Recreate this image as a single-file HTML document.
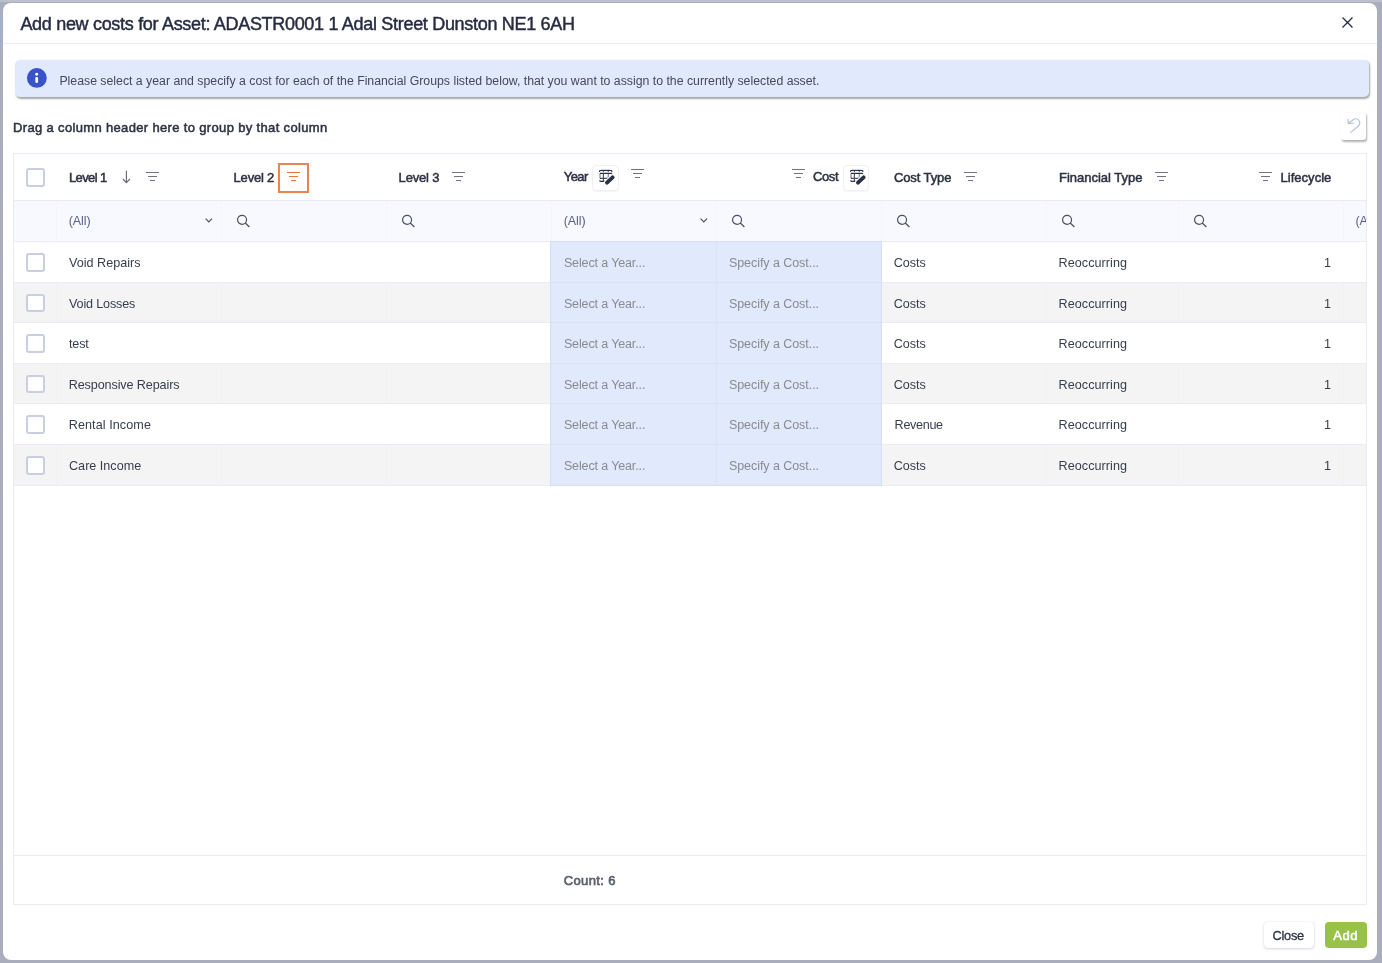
<!DOCTYPE html><html><head><meta charset="utf-8"><style>

html,body{margin:0;padding:0;}
body{width:1382px;height:963px;overflow:hidden;position:relative;background:#aaadbc;font-family:"Liberation Sans", sans-serif;}
.bgt{position:absolute;left:0;top:0;width:1382px;height:2px;background:#bcc0cc;}
.bgl{position:absolute;left:0;top:11px;width:3px;height:40px;background:#a6aec8;}
.modal{position:absolute;left:2.5px;top:3px;width:1374.7px;height:957px;background:#fff;border-radius:8px;overflow:hidden;}
.inner{position:absolute;left:-2.5px;top:-3px;width:1382px;height:963px;will-change:transform;}
.txt{position:absolute;left:0;top:0;font-family:"Liberation Sans", sans-serif;}
.ic{position:absolute;overflow:visible;}
.hl{position:absolute;height:1px;background:#eaecf3;}
.vl{position:absolute;width:1px;}
.info{position:absolute;left:15px;top:60px;width:1353.5px;height:37px;background:#e1e9fc;border-radius:5px;box-shadow:1px 1.5px 2px rgba(0,0,0,0.35);}
.undo{position:absolute;left:1340.7px;top:113.2px;width:25px;height:27px;background:#fff;border-radius:3px;box-shadow:1px 1.5px 2px rgba(0,0,0,0.3);}
.grid{position:absolute;left:13px;top:153px;width:1352px;height:750px;border:1px solid #eaecf3;}
.frow{position:absolute;left:14px;top:201px;width:1352px;height:40px;background:#f8f9fe;}
.row{position:absolute;left:14px;width:1352px;}
.blue{position:absolute;left:551px;width:330px;background:#e1e9fc;}
.cb{position:absolute;width:14.5px;height:14.5px;border:2px solid #c9cee2;border-radius:3px;background:#fff;}
.eb{position:absolute;width:24.5px;height:24.5px;border:1px solid #eef0f5;border-radius:4px;background:#fff;box-shadow:0 1px 1px rgba(0,0,0,0.04);}
.obox{position:absolute;left:278.3px;top:163px;width:26.5px;height:26.3px;border:2px solid #ea8552;}
.btn{position:absolute;top:922.2px;height:26.3px;border-radius:4px;}
.close{left:1263.5px;width:50px;background:#fff;box-shadow:0 1px 3px rgba(40,50,90,0.18),0 0 1px rgba(40,50,90,0.2);}
.add{left:1325px;width:41.5px;background:#97c147;}

</style></head><body>
<div class="bgt"></div><div class="bgl"></div>
<div class="modal"><div class="inner">
<svg class="ic" style="left:1341.5px;top:16.5px" width="11" height="11" viewBox="0 0 11 11"><path d="M0.5 0.5L10.5 10.5M10.5 0.5L0.5 10.5" stroke="#262b40" stroke-width="1.3" fill="none"/></svg>
<div class="hl" style="left:0;top:43px;width:1382px;background:#eceef5"></div>
<div class="info"></div>
<svg class="ic" style="left:26.7px;top:68.2px" width="20" height="20" viewBox="0 0 20 20"><circle cx="9.85" cy="9.9" r="9.9" fill="#3a53cb"/><circle cx="9.7" cy="6.2" r="1.45" fill="#fff"/><rect x="8.35" y="8.9" width="2.7" height="6" rx="1.1" fill="#fff"/></svg>
<div class="undo"><svg width="25" height="27" viewBox="0 0 25 27" style="position:absolute;left:0;top:0"><path d="M7.3 10.2L11.8 7.0A4.1 4.1 0 0 1 17.5 13.0L9.4 19.6" stroke="#b9c0dc" stroke-width="1.2" fill="none"/><path d="M7.2 6V10.4H12.6" stroke="#b9c0dc" stroke-width="1.2" fill="none"/></svg></div>
<div class="grid"></div>
<div class="hl" style="left:14px;top:200px;width:1352px"></div>
<div class="frow"></div>
<div class="hl" style="left:14px;top:241px;width:1352px"></div>
<div class="cb" style="left:26.3px;top:168px"></div>
<svg class="ic" style="left:121px;top:170px" width="11" height="14" viewBox="0 0 11 14"><path d="M5.4 0.8V12.5M1.9 9L5.4 12.6L8.9 9" stroke="#666b7e" stroke-width="1.15" fill="none"/></svg>
<svg class="ic" style="left:146px;top:172px" width="14" height="10" viewBox="0 0 14 10"><path d="M0 0.5H13M2 4.5H11M4 8.5H9" stroke="#6f7386" stroke-width="1.15" fill="none"/></svg>
<div class="obox"></div>
<svg class="ic" style="left:287px;top:172px" width="14" height="10" viewBox="0 0 14 10"><path d="M0 0.5H13M2 4.5H11M4 8.5H9" stroke="#e7783f" stroke-width="1.15" fill="none"/></svg>
<svg class="ic" style="left:452px;top:172px" width="14" height="10" viewBox="0 0 14 10"><path d="M0 0.5H13M2 4.5H11M4 8.5H9" stroke="#6f7386" stroke-width="1.15" fill="none"/></svg>
<div class="eb" style="left:592px;top:164.5px"></div><svg class="ic" style="left:596px;top:166.0px" width="20" height="20" viewBox="0 0 20 20"><path d="M5 3.8H14" stroke="#2b3046" stroke-opacity="0.3" stroke-width="0.9" fill="none"/><path d="M3.6 5.9V5.1Q3.6 4.5 4.3 4.5H15.1Q15.8 4.5 15.8 5.1V5.9M7.4 4.5V5.7M12.3 4.5V5.7" stroke="#2b3046" stroke-width="1.15" fill="none"/><path d="M3.9 7.4H15.1Q15.9 7.4 15.9 8.6" stroke="#2b3046" stroke-width="1.2" fill="none"/><path d="M4 7.4V12.4M12.3 7.4V12.4" stroke="#2b3046" stroke-opacity="0.6" stroke-width="1.15" fill="none"/><path d="M7.4 7.4V15.3M4 12.3H12.3" stroke="#2b3046" stroke-opacity="0.85" stroke-width="1.15" fill="none"/><path d="M3.7 14.3Q3.7 15.3 4.7 15.3H9.2" stroke="#2b3046" stroke-width="1.2" fill="none"/><path d="M10.8 16.9L16.8 11.2" stroke="#ffffff" stroke-width="6" stroke-linecap="round"/><path d="M11 16.7L16.6 11.4" stroke="#2b3046" stroke-width="3.9" stroke-linecap="round"/></svg>
<svg class="ic" style="left:631px;top:169px" width="14" height="10" viewBox="0 0 14 10"><path d="M0 0.5H13M2 4.5H11M4 8.5H9" stroke="#6f7386" stroke-width="1.15" fill="none"/></svg>
<svg class="ic" style="left:792px;top:169px" width="14" height="10" viewBox="0 0 14 10"><path d="M0 0.5H13M2 4.5H11M4 8.5H9" stroke="#6f7386" stroke-width="1.15" fill="none"/></svg>
<div class="eb" style="left:842.5px;top:164.5px"></div><svg class="ic" style="left:846.5px;top:166.0px" width="20" height="20" viewBox="0 0 20 20"><path d="M5 3.8H14" stroke="#2b3046" stroke-opacity="0.3" stroke-width="0.9" fill="none"/><path d="M3.6 5.9V5.1Q3.6 4.5 4.3 4.5H15.1Q15.8 4.5 15.8 5.1V5.9M7.4 4.5V5.7M12.3 4.5V5.7" stroke="#2b3046" stroke-width="1.15" fill="none"/><path d="M3.9 7.4H15.1Q15.9 7.4 15.9 8.6" stroke="#2b3046" stroke-width="1.2" fill="none"/><path d="M4 7.4V12.4M12.3 7.4V12.4" stroke="#2b3046" stroke-opacity="0.6" stroke-width="1.15" fill="none"/><path d="M7.4 7.4V15.3M4 12.3H12.3" stroke="#2b3046" stroke-opacity="0.85" stroke-width="1.15" fill="none"/><path d="M3.7 14.3Q3.7 15.3 4.7 15.3H9.2" stroke="#2b3046" stroke-width="1.2" fill="none"/><path d="M10.8 16.9L16.8 11.2" stroke="#ffffff" stroke-width="6" stroke-linecap="round"/><path d="M11 16.7L16.6 11.4" stroke="#2b3046" stroke-width="3.9" stroke-linecap="round"/></svg>
<svg class="ic" style="left:964px;top:172px" width="14" height="10" viewBox="0 0 14 10"><path d="M0 0.5H13M2 4.5H11M4 8.5H9" stroke="#6f7386" stroke-width="1.15" fill="none"/></svg>
<svg class="ic" style="left:1155px;top:172px" width="14" height="10" viewBox="0 0 14 10"><path d="M0 0.5H13M2 4.5H11M4 8.5H9" stroke="#6f7386" stroke-width="1.15" fill="none"/></svg>
<svg class="ic" style="left:1259px;top:172px" width="14" height="10" viewBox="0 0 14 10"><path d="M0 0.5H13M2 4.5H11M4 8.5H9" stroke="#6f7386" stroke-width="1.15" fill="none"/></svg>
<svg class="ic" style="left:204.7px;top:217.8px" width="8" height="5" viewBox="0 0 8 5"><path d="M0.6 0.6L3.8 4L7 0.6" stroke="#4b5068" stroke-width="1.15" fill="none"/></svg>
<svg class="ic" style="left:237px;top:214.5px" width="14" height="13" viewBox="0 0 14 13"><circle cx="5.05" cy="4.85" r="4.5" stroke="#4b5068" stroke-width="1.2" fill="none"/><path d="M8.3 8.1L12.4 11.9" stroke="#4b5068" stroke-width="1.3" fill="none"/></svg>
<svg class="ic" style="left:402px;top:214.5px" width="14" height="13" viewBox="0 0 14 13"><circle cx="5.05" cy="4.85" r="4.5" stroke="#4b5068" stroke-width="1.2" fill="none"/><path d="M8.3 8.1L12.4 11.9" stroke="#4b5068" stroke-width="1.3" fill="none"/></svg>
<svg class="ic" style="left:699.7px;top:217.8px" width="8" height="5" viewBox="0 0 8 5"><path d="M0.6 0.6L3.8 4L7 0.6" stroke="#4b5068" stroke-width="1.15" fill="none"/></svg>
<svg class="ic" style="left:732px;top:214.5px" width="14" height="13" viewBox="0 0 14 13"><circle cx="5.05" cy="4.85" r="4.5" stroke="#4b5068" stroke-width="1.2" fill="none"/><path d="M8.3 8.1L12.4 11.9" stroke="#4b5068" stroke-width="1.3" fill="none"/></svg>
<svg class="ic" style="left:897px;top:214.5px" width="14" height="13" viewBox="0 0 14 13"><circle cx="5.05" cy="4.85" r="4.5" stroke="#4b5068" stroke-width="1.2" fill="none"/><path d="M8.3 8.1L12.4 11.9" stroke="#4b5068" stroke-width="1.3" fill="none"/></svg>
<svg class="ic" style="left:1062px;top:214.5px" width="14" height="13" viewBox="0 0 14 13"><circle cx="5.05" cy="4.85" r="4.5" stroke="#4b5068" stroke-width="1.2" fill="none"/><path d="M8.3 8.1L12.4 11.9" stroke="#4b5068" stroke-width="1.3" fill="none"/></svg>
<svg class="ic" style="left:1194px;top:214.5px" width="14" height="13" viewBox="0 0 14 13"><circle cx="5.05" cy="4.85" r="4.5" stroke="#4b5068" stroke-width="1.2" fill="none"/><path d="M8.3 8.1L12.4 11.9" stroke="#4b5068" stroke-width="1.3" fill="none"/></svg>
<div class="vl" style="left:56px;top:201px;height:40px;background:#f5f6fb"></div>
<div class="vl" style="left:221px;top:201px;height:40px;background:#f5f6fb"></div>
<div class="vl" style="left:386px;top:201px;height:40px;background:#f5f6fb"></div>
<div class="vl" style="left:551px;top:201px;height:40px;background:#f5f6fb"></div>
<div class="vl" style="left:716px;top:201px;height:40px;background:#f5f6fb"></div>
<div class="vl" style="left:881px;top:201px;height:40px;background:#f5f6fb"></div>
<div class="vl" style="left:1046px;top:201px;height:40px;background:#f5f6fb"></div>
<div class="vl" style="left:1178px;top:201px;height:40px;background:#f5f6fb"></div>
<div class="vl" style="left:1343px;top:201px;height:40px;background:#f5f6fb"></div>
<div class="row" style="top:242px;height:40px;background:#ffffff"></div>
<div class="blue" style="top:241px;height:42px"></div>
<div class="hl" style="left:14px;top:282px;width:1352px"></div>
<div class="cb" style="left:26.3px;top:253.25px"></div>
<div class="row" style="top:283px;height:39px;background:#f4f4f5"></div>
<div class="blue" style="top:282px;height:41px"></div>
<div class="hl" style="left:14px;top:322px;width:1352px"></div>
<div class="vl" style="left:56px;top:283px;height:39px;background:#f1f1f4"></div>
<div class="vl" style="left:221px;top:283px;height:39px;background:#f1f1f4"></div>
<div class="vl" style="left:386px;top:283px;height:39px;background:#f1f1f4"></div>
<div class="vl" style="left:1046px;top:283px;height:39px;background:#f1f1f4"></div>
<div class="vl" style="left:1178px;top:283px;height:39px;background:#f1f1f4"></div>
<div class="vl" style="left:1343px;top:283px;height:39px;background:#f1f1f4"></div>
<div class="cb" style="left:26.3px;top:293.75px"></div>
<div class="row" style="top:323px;height:40px;background:#ffffff"></div>
<div class="blue" style="top:322px;height:42px"></div>
<div class="hl" style="left:14px;top:363px;width:1352px"></div>
<div class="cb" style="left:26.3px;top:334.25px"></div>
<div class="row" style="top:364px;height:39px;background:#f4f4f5"></div>
<div class="blue" style="top:363px;height:41px"></div>
<div class="hl" style="left:14px;top:403px;width:1352px"></div>
<div class="vl" style="left:56px;top:364px;height:39px;background:#f1f1f4"></div>
<div class="vl" style="left:221px;top:364px;height:39px;background:#f1f1f4"></div>
<div class="vl" style="left:386px;top:364px;height:39px;background:#f1f1f4"></div>
<div class="vl" style="left:1046px;top:364px;height:39px;background:#f1f1f4"></div>
<div class="vl" style="left:1178px;top:364px;height:39px;background:#f1f1f4"></div>
<div class="vl" style="left:1343px;top:364px;height:39px;background:#f1f1f4"></div>
<div class="cb" style="left:26.3px;top:374.75px"></div>
<div class="row" style="top:404px;height:40px;background:#ffffff"></div>
<div class="blue" style="top:403px;height:42px"></div>
<div class="hl" style="left:14px;top:444px;width:1352px"></div>
<div class="cb" style="left:26.3px;top:415.25px"></div>
<div class="row" style="top:445px;height:40px;background:#f4f4f5"></div>
<div class="blue" style="top:444px;height:42px"></div>
<div class="hl" style="left:14px;top:485px;width:1352px"></div>
<div class="vl" style="left:56px;top:445px;height:40px;background:#f1f1f4"></div>
<div class="vl" style="left:221px;top:445px;height:40px;background:#f1f1f4"></div>
<div class="vl" style="left:386px;top:445px;height:40px;background:#f1f1f4"></div>
<div class="vl" style="left:1046px;top:445px;height:40px;background:#f1f1f4"></div>
<div class="vl" style="left:1178px;top:445px;height:40px;background:#f1f1f4"></div>
<div class="vl" style="left:1343px;top:445px;height:40px;background:#f1f1f4"></div>
<div class="cb" style="left:26.3px;top:456.25px"></div>
<div class="hl" style="left:551px;top:241px;width:330px;background:#d6e1fb"></div>
<div class="hl" style="left:551px;top:282px;width:330px;background:#d6e1fb"></div>
<div class="hl" style="left:551px;top:322px;width:330px;background:#d6e1fb"></div>
<div class="hl" style="left:551px;top:363px;width:330px;background:#d6e1fb"></div>
<div class="hl" style="left:551px;top:403px;width:330px;background:#d6e1fb"></div>
<div class="hl" style="left:551px;top:444px;width:330px;background:#d6e1fb"></div>
<div class="vl" style="left:550px;top:241px;height:245px;background:#d3defa"></div>
<div class="vl" style="left:716px;top:241px;height:245px;background:#dae3fb"></div>
<div class="vl" style="left:881px;top:241px;height:245px;background:#d3defa"></div>
<div class="hl" style="left:551px;top:485px;width:330px;background:#d3defa"></div>
<div class="hl" style="left:551px;top:241px;width:330px;background:#d3defa"></div>
<div class="hl" style="left:14px;top:855px;width:1352px"></div>
<div class="btn close"></div>
<div class="btn add"></div>
<svg class="txt" width="1382" height="963" viewBox="0 0 1382 963"><defs><clipPath id="clipA"><rect x="1343" y="201" width="23" height="40"/></clipPath></defs>
<text x="20.40" y="29.70" font-size="18" fill="#262b40" textLength="554.60" lengthAdjust="spacing" stroke="#262b40" stroke-width="0.45">Add new costs for Asset: ADASTR0001 1 Adal Street Dunston NE1 6AH</text>
<text x="59.40" y="84.80" font-size="12.3" fill="#454a5b" textLength="760.02" lengthAdjust="spacing">Please select a year and specify a cost for each of the Financial Groups listed below, that you want to assign to the currently selected asset.</text>
<text x="13.00" y="132.00" font-size="13" fill="#2d3142" textLength="314.23" lengthAdjust="spacing" stroke="#2d3142" stroke-width="0.5">Drag a column header here to group by that column</text>
<text x="68.90" y="182.00" font-size="13" fill="#2d3142" textLength="38.33" lengthAdjust="spacing" stroke="#2d3142" stroke-width="0.5">Level 1</text>
<text x="233.60" y="182.00" font-size="13" fill="#2d3142" textLength="40.63" lengthAdjust="spacing" stroke="#2d3142" stroke-width="0.5">Level 2</text>
<text x="398.60" y="182.00" font-size="13" fill="#2d3142" textLength="40.93" lengthAdjust="spacing" stroke="#2d3142" stroke-width="0.5">Level 3</text>
<text x="563.80" y="181.00" font-size="13" fill="#2d3142" textLength="24.43" lengthAdjust="spacing" stroke="#2d3142" stroke-width="0.5">Year</text>
<text x="813.10" y="181.00" font-size="13" fill="#2d3142" textLength="25.41" lengthAdjust="spacing" stroke="#2d3142" stroke-width="0.5">Cost</text>
<text x="893.90" y="181.50" font-size="13" fill="#2d3142" textLength="57.53" lengthAdjust="spacing" stroke="#2d3142" stroke-width="0.5">Cost Type</text>
<text x="1059.00" y="182.00" font-size="13" fill="#2d3142" textLength="83.43" lengthAdjust="spacing" stroke="#2d3142" stroke-width="0.5">Financial Type</text>
<text x="1280.50" y="182.00" font-size="13" fill="#2d3142" textLength="50.83" lengthAdjust="spacing" stroke="#2d3142" stroke-width="0.5">Lifecycle</text>
<text x="68.70" y="225.30" font-size="12.5" fill="#59618f" textLength="21.96" lengthAdjust="spacing">(All)</text>
<text x="563.70" y="225.30" font-size="12.5" fill="#59618f" textLength="21.96" lengthAdjust="spacing">(All)</text>
<text x="1355.40" y="225.30" font-size="12.5" fill="#59618f" textLength="21.96" lengthAdjust="spacing" clip-path="url(#clipA)">(All)</text>
<text x="69.00" y="267.00" font-size="12.6" fill="#383d4e" textLength="71.50" lengthAdjust="spacing">Void Repairs</text>
<text x="563.90" y="267.00" font-size="12.5" fill="#898b92" textLength="81.47" lengthAdjust="spacing">Select a Year...</text>
<text x="728.90" y="267.00" font-size="12.5" fill="#898b92" textLength="90.17" lengthAdjust="spacing">Specify a Cost...</text>
<text x="893.80" y="267.00" font-size="12.6" fill="#383d4e" textLength="31.90" lengthAdjust="spacing">Costs</text>
<text x="1058.50" y="267.00" font-size="12.6" fill="#383d4e" textLength="68.50" lengthAdjust="spacing">Reoccurring</text>
<text x="1324.00" y="267.00" font-size="12.6" fill="#383d4e">1</text>
<text x="69.00" y="308.00" font-size="12.6" fill="#383d4e" textLength="66.40" lengthAdjust="spacing">Void Losses</text>
<text x="563.90" y="308.00" font-size="12.5" fill="#898b92" textLength="81.47" lengthAdjust="spacing">Select a Year...</text>
<text x="728.90" y="308.00" font-size="12.5" fill="#898b92" textLength="90.17" lengthAdjust="spacing">Specify a Cost...</text>
<text x="893.80" y="308.00" font-size="12.6" fill="#383d4e" textLength="31.90" lengthAdjust="spacing">Costs</text>
<text x="1058.50" y="308.00" font-size="12.6" fill="#383d4e" textLength="68.50" lengthAdjust="spacing">Reoccurring</text>
<text x="1324.00" y="308.00" font-size="12.6" fill="#383d4e">1</text>
<text x="69.00" y="348.20" font-size="12.6" fill="#383d4e" textLength="19.80" lengthAdjust="spacing">test</text>
<text x="563.90" y="348.20" font-size="12.5" fill="#898b92" textLength="81.47" lengthAdjust="spacing">Select a Year...</text>
<text x="728.90" y="348.20" font-size="12.5" fill="#898b92" textLength="90.17" lengthAdjust="spacing">Specify a Cost...</text>
<text x="893.80" y="348.20" font-size="12.6" fill="#383d4e" textLength="31.90" lengthAdjust="spacing">Costs</text>
<text x="1058.50" y="348.20" font-size="12.6" fill="#383d4e" textLength="68.50" lengthAdjust="spacing">Reoccurring</text>
<text x="1324.00" y="348.20" font-size="12.6" fill="#383d4e">1</text>
<text x="68.70" y="388.70" font-size="12.6" fill="#383d4e" textLength="110.90" lengthAdjust="spacing">Responsive Repairs</text>
<text x="563.90" y="388.70" font-size="12.5" fill="#898b92" textLength="81.47" lengthAdjust="spacing">Select a Year...</text>
<text x="728.90" y="388.70" font-size="12.5" fill="#898b92" textLength="90.17" lengthAdjust="spacing">Specify a Cost...</text>
<text x="893.80" y="388.70" font-size="12.6" fill="#383d4e" textLength="31.90" lengthAdjust="spacing">Costs</text>
<text x="1058.50" y="388.70" font-size="12.6" fill="#383d4e" textLength="68.50" lengthAdjust="spacing">Reoccurring</text>
<text x="1324.00" y="388.70" font-size="12.6" fill="#383d4e">1</text>
<text x="68.70" y="429.20" font-size="12.6" fill="#383d4e" textLength="82.20" lengthAdjust="spacing">Rental Income</text>
<text x="563.90" y="429.20" font-size="12.5" fill="#898b92" textLength="81.47" lengthAdjust="spacing">Select a Year...</text>
<text x="728.90" y="429.20" font-size="12.5" fill="#898b92" textLength="90.17" lengthAdjust="spacing">Specify a Cost...</text>
<text x="894.60" y="429.20" font-size="12.6" fill="#383d4e" textLength="48.50" lengthAdjust="spacing">Revenue</text>
<text x="1058.50" y="429.20" font-size="12.6" fill="#383d4e" textLength="68.50" lengthAdjust="spacing">Reoccurring</text>
<text x="1324.00" y="429.20" font-size="12.6" fill="#383d4e">1</text>
<text x="69.00" y="470.00" font-size="12.6" fill="#383d4e" textLength="72.20" lengthAdjust="spacing">Care Income</text>
<text x="563.90" y="470.00" font-size="12.5" fill="#898b92" textLength="81.47" lengthAdjust="spacing">Select a Year...</text>
<text x="728.90" y="470.00" font-size="12.5" fill="#898b92" textLength="90.17" lengthAdjust="spacing">Specify a Cost...</text>
<text x="893.80" y="470.00" font-size="12.6" fill="#383d4e" textLength="31.90" lengthAdjust="spacing">Costs</text>
<text x="1058.50" y="470.00" font-size="12.6" fill="#383d4e" textLength="68.50" lengthAdjust="spacing">Reoccurring</text>
<text x="1324.00" y="470.00" font-size="12.6" fill="#383d4e">1</text>
<text x="563.80" y="885.00" font-size="13" fill="#5b606e" textLength="51.63" lengthAdjust="spacing" stroke="#5b606e" stroke-width="0.65">Count: 6</text>
<text x="1272.60" y="940.00" font-size="12.8" fill="#2a2f42" textLength="31.52" lengthAdjust="spacing" stroke="#2a2f42" stroke-width="0.3">Close</text>
<text x="1333.30" y="940.00" font-size="13" fill="#ffffff" textLength="24.13" lengthAdjust="spacing" stroke="#ffffff" stroke-width="0.55">Add</text>
</svg>
</div></div></body></html>
